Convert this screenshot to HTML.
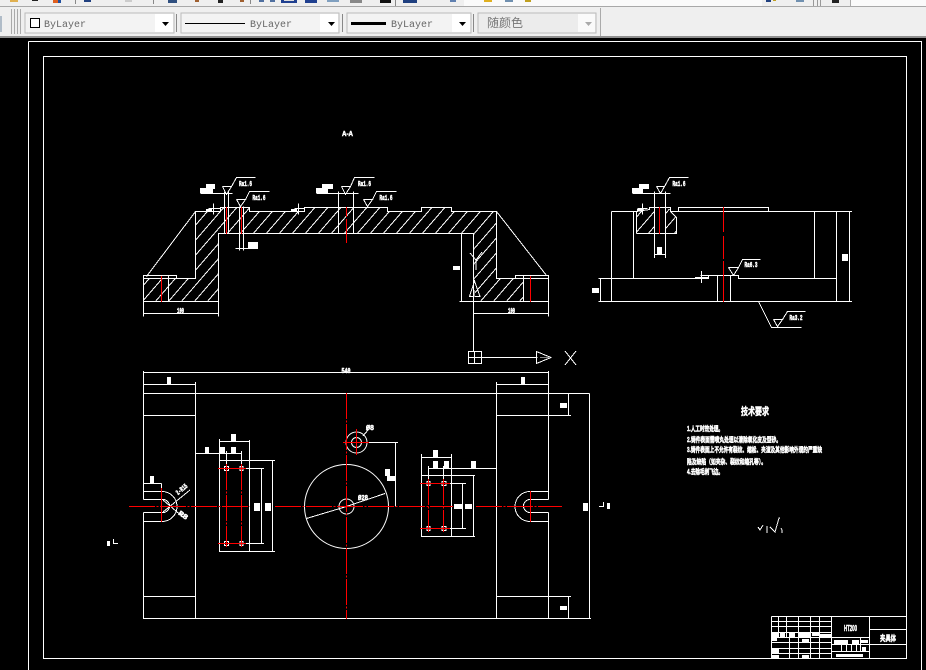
<!DOCTYPE html>
<html><head><meta charset="utf-8"><title>CAD</title>
<style>
html,body{margin:0;padding:0;background:#000;width:926px;height:670px;overflow:hidden}
svg{display:block}
.w{fill:none;stroke:#fff;stroke-width:1}
.r{fill:none;stroke:#f00;stroke-width:1}
.c{fill:none;stroke:#f00;stroke-width:1;stroke-dasharray:26 1.5 2 1.5}
.t{font:bold 7px "Liberation Mono",monospace;fill:#fff;stroke:#fff;stroke-width:.55;text-anchor:middle}
.z{font:bold 7px "Liberation Sans","Noto Sans CJK SC",sans-serif;fill:#fff;stroke:#fff;stroke-width:.5}
.b{font:10px "Liberation Mono",monospace;fill:#666}
</style></head><body>
<svg width="926" height="670" viewBox="0 0 926 670" xmlns="http://www.w3.org/2000/svg">
<defs>
<clipPath id="cp1"><path d="M143.500 301.500V278.500H195.500V211.500H220.500V207.500H249.500V211.500H304.500V207.500H387.500V211.500H421.500V207.500H451.500V211.500H496.500V278.500H523.500V301.500H473.500V233.500H218.500V301.500Z"/></clipPath>
<clipPath id="cp2"><path d="M636 209H654V233H636ZM666 209H676V233H666Z"/></clipPath>
<path id="hl" vector-effect="non-scaling-stroke" d="M60 320l130-130M70 320l130-130M80 320l130-130M90 320l130-130M100 320l130-130M110 320l130-130M120 320l130-130M130 320l130-130M140 320l130-130M150 320l130-130M160 320l130-130M170 320l130-130M180 320l130-130M190 320l130-130M200 320l130-130M210 320l130-130M220 320l130-130M230 320l130-130M240 320l130-130M250 320l130-130M260 320l130-130M270 320l130-130M280 320l130-130M290 320l130-130M300 320l130-130M310 320l130-130M320 320l130-130M330 320l130-130M340 320l130-130M350 320l130-130M360 320l130-130M370 320l130-130M380 320l130-130M390 320l130-130M400 320l130-130M410 320l130-130M420 320l130-130M430 320l130-130M440 320l130-130M450 320l130-130M460 320l130-130M470 320l130-130M480 320l130-130M490 320l130-130M500 320l130-130M510 320l130-130M520 320l130-130M530 320l130-130M540 320l130-130M550 320l130-130M560 320l130-130" fill="none" stroke="#fff" stroke-width="1"/>
</defs>
<rect width="926" height="670" fill="#000"/>
<!-- toolbars -->
<g shape-rendering="crispEdges">
<rect width="926" height="38" fill="#efefef"/>
<rect y="6" width="926" height="1" fill="#a8a8a8"/>
<rect y="36" width="926" height="2" fill="#8f8f8f"/>
<rect x="464" y="0" width="298" height="6" fill="#fafafa"/>
<rect x="851" y="0" width="75" height="6" fill="#fafafa"/>
<rect x="813" y="0" width="1" height="6" fill="#999"/><rect x="817" y="0" width="1" height="6" fill="#999"/><rect x="820" y="0" width="1" height="6" fill="#999"/><rect x="850" y="0" width="1" height="6" fill="#aaa"/>
<rect x="75" y="0" width="1" height="4" fill="#888"/><rect x="153" y="0" width="1" height="4" fill="#888"/><rect x="250" y="0" width="1" height="4" fill="#888"/><rect x="395" y="0" width="1" height="6" fill="#888"/>
<rect x="10" y="0" width="8" height="2" fill="#e0b050"/><rect x="32" y="0" width="6" height="1" fill="#222"/>
<rect x="53" y="0" width="8" height="3" fill="#e06020"/><rect x="58" y="0" width="3" height="3" fill="#2050a0"/>
<rect x="84" y="0" width="7" height="2" fill="#204080"/><rect x="125" y="0" width="7" height="2" fill="#ccc"/>
<rect x="168" y="0" width="9" height="3" fill="#305080"/><rect x="195" y="0" width="4" height="2" fill="#a06030"/>
<rect x="218" y="0" width="5" height="3" fill="#222"/><rect x="240" y="0" width="4" height="2" fill="#a06030"/>
<rect x="259" y="0" width="5" height="2" fill="#5070a0"/><rect x="270" y="0" width="5" height="2" fill="#5070a0"/>
<rect x="281" y="0" width="16" height="3" fill="#204090"/><rect x="284" y="0" width="10" height="1" fill="#ddd"/>
<rect x="305" y="0" width="12" height="3" fill="#204090"/><rect x="327" y="0" width="12" height="2" fill="#80a0c0"/>
<rect x="350" y="0" width="12" height="3" fill="#888"/><rect x="380" y="0" width="11" height="3" fill="#111"/>
<rect x="403" y="0" width="14" height="3" fill="#204080"/><rect x="450" y="0" width="6" height="2" fill="#6080b0"/>
<rect x="484" y="0" width="8" height="2" fill="#e0b020"/><rect x="505" y="0" width="8" height="2" fill="#7090b0"/><rect x="525" y="0" width="6" height="2" fill="#c0a020"/>
<rect x="766" y="0" width="5" height="2" fill="#204080"/><rect x="773" y="0" width="3" height="1" fill="#c0a020"/><rect x="796" y="0" width="8" height="2" fill="#7090b0"/>
<rect x="832" y="0" width="7" height="3" fill="#222"/>
<!-- left bit -->
<rect x="0" y="16" width="2" height="16" fill="#b0bcc8"/>
<rect x="11" y="9" width="1" height="25" fill="#aaa"/><rect x="14" y="9" width="1" height="25" fill="#aaa"/><rect x="17" y="9" width="1" height="25" fill="#aaa"/><rect x="20" y="9" width="1" height="25" fill="#aaa"/>
<rect x="176" y="14" width="1" height="18" fill="#888"/><rect x="342" y="14" width="1" height="18" fill="#888"/><rect x="473" y="14" width="1" height="18" fill="#888"/>
<rect x="600" y="8" width="1" height="28" fill="#aaa"/>
<!-- combos -->
<rect x="25" y="13" width="149" height="20" fill="#f3f3f3" stroke="#bbb"/><rect x="155" y="14" width="18" height="18" fill="#fff"/>
<rect x="181" y="13" width="158" height="20" fill="#f3f3f3" stroke="#bbb"/><rect x="320" y="14" width="18" height="18" fill="#fff"/>
<rect x="347" y="13" width="124" height="20" fill="#f3f3f3" stroke="#bbb"/><rect x="452" y="14" width="18" height="18" fill="#fff"/>
<rect x="478" y="13" width="118" height="20" fill="#ececec" stroke="#bbb"/><rect x="578" y="14" width="17" height="18" fill="#fafafa"/>
<rect x="30.500" y="18.500" width="9" height="9" fill="#fff" stroke="#000"/>
<rect x="185" y="23" width="60" height="1" fill="#000"/>
<rect x="351" y="22" width="35" height="3" fill="#000"/>
</g>
<path d="M162 22h7l-3.500 4z M328 22h7l-3.500 4z M459 22h7l-3.500 4z" fill="#000"/>
<path d="M585 22h7l-3.500 4z" fill="#aaa"/>
<text class="b" x="44" y="27">ByLayer</text>
<text class="b" x="250" y="27">ByLayer</text>
<text class="b" x="391" y="27">ByLayer</text>
<text x="487" y="27" style="font:12px 'Liberation Sans','Noto Sans CJK SC',sans-serif;fill:#777">随颜色</text>

<g shape-rendering="crispEdges">
<!-- frames -->
<path class="w" d="M28.500 41.500H921.500V670M28.500 41.500V670"/>
<path class="w" d="M43.500 56.500H906.500V658.500H43.500Z"/>

<!-- hatching -->
<g clip-path="url(#cp1)"><use href="#hl" transform="translate(-60 -110) scale(1.3 1.5)"/></g>
<g clip-path="url(#cp2)"><use href="#hl" transform="translate(-55 -110) scale(1.3 1.5)"/></g>

<!-- left view profile -->
<path class="w" d="M143.500 301.500V278.500H195.500V211.500H220.500V207.500H249.500V211.500H304.500V207.500H387.500V211.500H421.500V207.500H451.500V211.500H496.500V278.500H548.500V301.500H473.500V233.500H218.500V301.500Z"/>
<path class="w" d="M523.500 275.500V301.500M515.500 278.500V275.500H548.500V278.500M496.500 211.500L546.500 275.500"/>
<path class="w" d="M195.500 211.500L146.500 276.500M143.500 278.500V275.500H176.500V278.500M168.500 275.500V301.500M143.500 301.500H218.500"/>
<path class="w" d="M143.500 301.500V316.500M218.500 301.500V316.500M143.500 313.500H218.500M473.500 301.500V316.500M548.500 301.500V316.500M473.500 313.500H548.500"/>
<path class="w" d="M224.500 191.500V233.500M228.500 191.500V233.500M239.500 206.500V250.500M243.500 206.500V250.500M235.500 248.500H250.500"/>
<path class="w" d="M200.500 193.500H232.500M222.500 186.500H231.500L226.500 194.500L222.500 186.500M231.500 186.500L236.500 177.500H255.500"/>
<path class="w" d="M236.500 199.500H245.500L240.500 206.500L236.500 199.500M245.500 199.500L249.500 191.500H269.500"/>
<path class="w" d="M213.500 203.500V214.500M208.500 208.500H220.500M298.500 203.500V214.500M294.500 208.500H304.500"/>
<path class="w" d="M338.500 191.500V233.500M353.500 191.500V233.500M316.500 193.500H358.500M341.500 186.500H350.500L345.500 194.500L341.500 186.500M350.500 186.500L354.500 177.500H374.500"/>
<path class="w" d="M363.500 199.500H372.500L367.500 206.500L363.500 199.500M372.500 199.500L376.500 191.500H396.500"/>
<path class="w" d="M461.500 233.500V301.500M459.500 301.500H473.500"/>
<path class="r" d="M161.500 276V302M226.500 207V234M241.500 207V234M346.500 207V217M346.500 219V243M530.500 276V302"/>
<g fill="#fff">
<rect x="206" y="184" width="9" height="5"/><rect x="200" y="188" width="13" height="5"/><rect x="322" y="184" width="11" height="5"/><rect x="316" y="188" width="12" height="5"/>
<rect x="206" y="209" width="6" height="2"/><rect x="291" y="209" width="6" height="2"/>
<rect x="248" y="242" width="10" height="7"/><rect x="453" y="266" width="7" height="4"/>
</g>

<!-- UCS icon -->
<path class="w" d="M473.500 301.500V351.500M468.500 351.500H481.500V363.500H468.500ZM468.500 357.500H481.500M474.500 351.500V363.500M481.500 357.500H537.500"/>
<path d="M474.500 281L480 296.500H469.500Z M536.500 351.500L551 357.500L536.500 363.500Z" fill="none" stroke="#fff"/>
<path d="M474.500 290V297M540 357.500H550" stroke="#888" fill="none"/>
<path class="w" d="M565 351L576 365M576 351L565 365M470 253L476 260L482 252M476 260V270"/>

<!-- right view -->
<path class="w" d="M598.500 301.500H852M598.500 278.500H708.500V275.500H700.500M708.500 275.500H738.500V278.500H836.500M611.500 211.500V301.500M611.500 211.500H636M670.500 211.500H852M633.500 211.500V278.500M814.500 211.500V278.500M836.500 211.500V301.500M717.500 275.500V301.500M730.500 275.500V301.500M849.500 211.500V301.500M600.500 278.500V301.500"/>
<path class="w" d="M670.500 211.500H678.500V207.500H768.500V211.500"/>
<path class="w" d="M636.500 233.500V211.500L649.500 209.500V207.500H670.500V211.500L676.500 217.500V233.500H636.500"/>
<path class="w" d="M654.500 191.500V258M665.500 191.500V258M654.500 254.500H665.500M632.500 193.500H670.500M656.500 186.500H664.500L660.500 193.500L656.500 186.500M664.500 186.500L669.500 177.500H688.500"/>
<path class="w" d="M642.500 203.500V214.500M637.500 208.500H647.500"/>
<path class="w" d="M701.500 271V283M695 277.500H708"/>
<path class="w" d="M728.500 267.500H738.500L733.500 275.500L728.500 267.500M738.500 267.500L742.500 259.500H760.500"/>
<path class="w" d="M758.500 301.500L771.500 327.500H801.500M773.500 319.500H782.500L777.500 326.500L773.500 319.500M782.500 319.500L787.500 311.500H805.500"/>
<path class="r" d="M659.500 207V234M723.500 207V232M723.500 236V259M723.500 261V302"/>
<g fill="#fff">
<rect x="639" y="184" width="10" height="5"/><rect x="632" y="188" width="11" height="5"/>
<rect x="657" y="247" width="5" height="7"/><rect x="842" y="254" width="6" height="7"/>
<rect x="592" y="288" width="7" height="5"/><rect x="637" y="209" width="5" height="2"/>
</g>

<!-- plan view -->
<path class="w" d="M143.500 371V499.500M143.500 512.500V618.500H548.500V512.500M548.500 499.500V371M143.500 372.500H548.500M143.500 393.500H589.500M548.500 618.500H591M195.500 382V618.500M496.500 382V618.500M143.500 384.500H195.500M496.500 384.500H548.500"/>
<path class="w" d="M143.500 415.500H195.500M143.500 596.500H195.500M496.500 415.500H571M496.500 596.500H571M568.500 393.500V415.500M568.500 596.500V618.500M589.500 393.500V618.500"/>
<path class="w" d="M143.500 483.500H161.500M143.500 491.500H162M143.500 499.500H163M143.500 512.500H163M143.500 521.500H162M161.500 483.500V520"/>
<path class="w" d="M530.500 491.500H548.500M530.500 499.500H548.500M530.500 512.500H548.500M530.500 521.500H548.500"/>
<path class="w" d="M162 491.500A15 15 0 0 1 162 521.500M163 499.500A6.500 6.500 0 0 1 163 512.500M530 491.500A15 15 0 0 0 530 521.500M530 499.500A6.500 6.500 0 0 0 530 512.500"/>
<path class="w" d="M163 512L190 490M163 500L183 517"/>
</g>
<circle cx="346.500" cy="506.500" r="42" class="w"/>
<circle cx="346.500" cy="506.500" r="7.500" class="w"/>
<circle cx="356.500" cy="442.500" r="10.500" class="w"/>
<circle cx="356.500" cy="442.500" r="5" class="w"/>
<g shape-rendering="crispEdges">
<path class="w" d="M306.500 518.500L346.500 506.500L385 493.500M356.500 442.500H398M395.500 442.500V506.500M363 436L368 430"/>
<!-- left holes block -->
<path class="w" d="M219.500 439V551.500H275M219.500 460.500H275M249.500 440V551.500M272.500 460.500V551.500M261.500 468.500V543.500M218 468.500H264M218 543.500H264M226.500 451V468M241.500 451V468M219.500 441.500H249.500M195.500 453.500H241.500"/>
<rect x="224.500" y="466.500" width="4" height="4" class="w"/><rect x="240" y="466.500" width="3" height="4" class="w"/><rect x="224.500" y="541.500" width="4" height="4" class="w"/><rect x="240" y="541.500" width="3" height="4" class="w"/>
<!-- right holes block -->
<path class="w" d="M421.500 454V536.500H475M421.500 475.500H475M451.500 454V536.500M473.500 475.500V536.500M462.500 483.500V528.500M420 483.500H466M420 528.500H466M428.500 466V483M443.500 466V483M421.500 457.500H451.500M428.500 468.500H496"/>
<rect x="427" y="481.500" width="3" height="4" class="w"/><rect x="442" y="481.500" width="4" height="4" class="w"/><rect x="427" y="526.500" width="3" height="4" class="w"/><rect x="442" y="526.500" width="4" height="4" class="w"/>
<!-- centre lines -->
<path class="c" d="M129 506.500H250M275 506.500H453M476 506.500H562"/>
<path class="c" d="M346.500 393V619"/>
<path class="c" d="M226.500 464V547M241.500 464V547M428.500 479V532M443.500 479V532" stroke-dasharray="14 1.500 2 1.500"/>
<path class="r" d="M218 468.500H246M218 543.500H246M420 483.500H450M420 528.500H450M343 442.500H369M356.500 429V455M161.500 488V522M530.500 491V522"/>
<!-- blobs -->
<g fill="#fff">
<rect x="167" y="377" width="4" height="7"/><rect x="521" y="377" width="4" height="7"/><rect x="150" y="476" width="4" height="7"/>
<rect x="231" y="434" width="5" height="7"/><rect x="205" y="447" width="4" height="6"/><rect x="220" y="447" width="5" height="6"/><rect x="231" y="447" width="5" height="6"/>
<rect x="254" y="503" width="6" height="8"/><rect x="265" y="503" width="6" height="8"/>
<rect x="433" y="450" width="5" height="7"/><rect x="433" y="461" width="5" height="7"/><rect x="444" y="461" width="5" height="7"/><rect x="471" y="461" width="5" height="7"/>
<rect x="454" y="504" width="8" height="5"/><rect x="465" y="504" width="7" height="5"/>
<rect x="385" y="469" width="5" height="7"/><rect x="387" y="476" width="8" height="5"/>
<rect x="560" y="403" width="7" height="5"/><rect x="560" y="606" width="7" height="4"/>
<rect x="583" y="503" width="5" height="8"/><rect x="107" y="541" width="3" height="5"/>
<rect x="607" y="503" width="3" height="6"/>
</g>
<path class="w" d="M113.500 539V543.500H118M603.500 502V506.500H599"/>
<!-- title block -->
<path class="w" d="M771.500 616.500H906.500M771.500 616.500V658.500M831.500 616.500V658.500M869.500 616.500V658.500M869.500 629.500H906.500M869.500 644.500H906.500M831.500 637.500H869.500M831.500 644.500H869.500M831.500 651.500H869.500"/>
<path class="w" d="M771.500 621.500H831.500M771.500 626.500H831.500M771.500 632.500H831.500M771.500 637.500H831.500M771.500 642.500H831.500M771.500 648.500H831.500M771.500 653.500H831.500M778.500 616.500V637.500M786.500 616.500V637.500M798.500 616.500V658.500M810.500 616.500V658.500M819.500 616.500V658.500M789.500 637.500V658.500M841.500 644.500V651.500M846.500 644.500V651.500M851.500 644.500V651.500M856.500 644.500V651.500M860.500 637.500V651.500"/>
<g fill="#fff">
<rect x="772" y="633" width="6" height="4"/><rect x="780" y="633" width="5" height="4"/><rect x="789" y="633" width="6" height="4"/><rect x="799" y="633" width="12" height="4"/><rect x="812" y="633" width="7" height="3"/><rect x="820" y="634" width="11" height="3"/>
<rect x="772" y="638" width="5" height="3"/><rect x="802" y="639" width="7" height="3"/><rect x="772" y="649" width="7" height="4"/><rect x="772" y="655" width="7" height="3"/><rect x="802" y="655" width="7" height="3"/>
<rect x="834" y="640" width="14" height="4"/><rect x="852" y="640" width="7" height="4"/><rect x="861" y="640" width="7" height="3"/><rect x="862" y="647" width="4" height="4"/><rect x="836" y="654" width="27" height="3"/>
</g>
<path class="w" d="M758 527L760 530L763 525M767 526V533M770 527L775 532L779 518H780M781 528L782 530V533"/>
</g>
<!-- real text -->
<text class="t" x="245.500" y="186" textLength="13" lengthAdjust="spacingAndGlyphs">Ra1.6</text>
<text class="t" x="259" y="200" textLength="13" lengthAdjust="spacingAndGlyphs">Ra1.6</text>
<text class="t" x="364.500" y="186" textLength="13" lengthAdjust="spacingAndGlyphs">Ra1.6</text>
<text class="t" x="386" y="200" textLength="13" lengthAdjust="spacingAndGlyphs">Ra1.6</text>
<text class="t" x="679" y="186" textLength="13" lengthAdjust="spacingAndGlyphs">Ra1.6</text>
<text class="t" x="751" y="267" textLength="13" lengthAdjust="spacingAndGlyphs">Ra6.3</text>
<text class="t" x="796" y="320" textLength="13" lengthAdjust="spacingAndGlyphs">Ra3.2</text>
<text class="t" x="180.500" y="313" textLength="7" lengthAdjust="spacingAndGlyphs">100</text>
<text class="t" x="511.500" y="313" textLength="7" lengthAdjust="spacingAndGlyphs">100</text>
<text class="t" x="346" y="373" textLength="9" lengthAdjust="spacingAndGlyphs">540</text>
<text class="t" x="363" y="500" textLength="10" lengthAdjust="spacingAndGlyphs">Ø28</text>
<text class="t" x="370" y="430" textLength="8" lengthAdjust="spacingAndGlyphs">Ø8</text>
<text class="t" x="183" y="491" textLength="13" lengthAdjust="spacingAndGlyphs" transform="rotate(-40 183 491)">2-R15</text>
<text class="t" x="182" y="517" textLength="10" lengthAdjust="spacingAndGlyphs" transform="rotate(35 182 517)">R8</text>
<text class="z" x="342" y="136" textLength="11" lengthAdjust="spacingAndGlyphs">A-A</text>
<text class="z" x="741" y="415" style="font-size:10px" textLength="28" lengthAdjust="spacingAndGlyphs">技术要求</text>
<text class="z" x="687" y="431" textLength="36" lengthAdjust="spacingAndGlyphs">1.人工时效处理。</text>
<text class="z" x="687" y="442" textLength="94" lengthAdjust="spacingAndGlyphs">2.铸件表面需喷丸处理以清除氧化皮及型砂。</text>
<text class="z" x="687" y="452" textLength="135" lengthAdjust="spacingAndGlyphs">3.铸件表面上不允许有裂纹、缩松、夹渣及其他影响外观的严重缺</text>
<text class="z" x="687" y="464" textLength="79" lengthAdjust="spacingAndGlyphs">陷及缺陷（如夹杂、裂纹和缩孔等）。</text>
<text class="z" x="687" y="474" textLength="36" lengthAdjust="spacingAndGlyphs">4.去除毛刺飞边。</text>
<text class="z" x="844" y="631" style="font-size:8px" textLength="13" lengthAdjust="spacingAndGlyphs">HT200</text>
<text class="z" x="880" y="641" style="font-size:8px" textLength="16" lengthAdjust="spacingAndGlyphs">夹具体</text>
</svg>
</body></html>
